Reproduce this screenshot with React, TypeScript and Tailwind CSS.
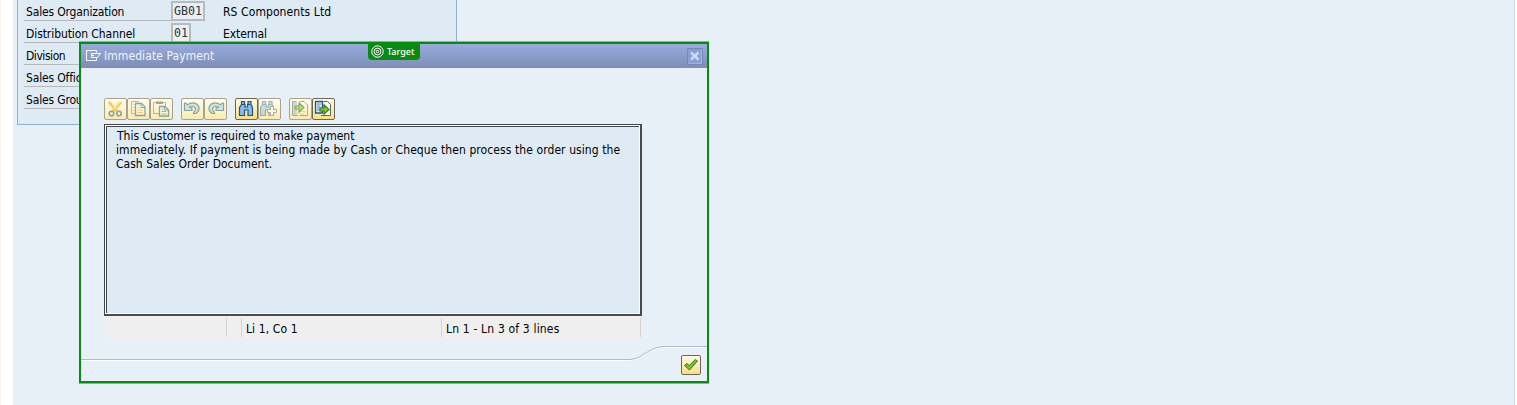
import type { ReactNode } from "react";

const rows = [
  { label: "Sales Organization", code: "GB01", text: "RS Components Ltd", labelClass: "tracking-[-0.16px]", textClass: "tracking-[0.09px]" },
  { label: "Distribution Channel", code: "01", text: "External", labelClass: "tracking-[-0.08px]", textClass: "tracking-[-0.1px]" },
  { label: "Division", labelClass: "tracking-[-0.45px]" },
  { label: "Sales Office", labelClass: "tracking-[-0.16px]" },
  { label: "Sales Group", labelClass: "tracking-[-0.16px]" },
];

function ToolButton({ children, disabled = false }: { children: ReactNode; disabled?: boolean }) {
  return (
    <button
      className={
        "h-[22px] w-[23px] rounded-[2px] border bg-gradient-to-b " +
        (disabled
          ? "border-[#aaa28d] from-[#fffdee] to-[#fbebb0]"
          : "border-[#6c6658] from-[#fffbe0] to-[#f9df83]")
      }
    >
      <svg width="21" height="20" viewBox="1 1 21 20" fill="none" className={disabled ? "opacity-60" : ""}>
        {children}
      </svg>
    </button>
  );
}

function Binoculars() {
  return (
    <g fill="#8db9e8" stroke="#1d5788" strokeWidth="1.2">
      <path d="M6.5 3.5H9.5V6.5H10V9H12.5V6.5H13V3.5H16V6.5L17.5 9.5V17.5H13V12H9.5V17.5H4.5V9.5L6.5 6.5Z" />
      <path d="M7 6.5H9.5M13 6.5H15.5" />
    </g>
  );
}

function Arrow() {
  return <path d="M9 10H13V6.8L18 11.5L13 16.2V13H9Z" fill="#8acb25" stroke="#35741e" strokeWidth="1.1" />;
}

function Undo() {
  return (
    <path
      d="M3.5 5V12.5H11V10.5L8.6 9.3C11.5 7.4 15 9 14.5 12L12.5 14.5V15.5H15C17.5 13.5 18.6 11 17.8 8.6C16.3 4.5 10.5 3.8 6.5 6.8L4.8 5Z"
      fill="#b4d8de"
      stroke="#396f86"
      strokeWidth="1.2"
    />
  );
}

export default function App() {
  return (
    <main className="relative h-[405px] w-[1517px] overflow-hidden border-l border-[#f5f5f5] bg-white pl-3 font-['DejaVu_Sans_Condensed','DejaVu_Sans',sans-serif] text-[12px] text-black">
      <div className="h-full w-[1502px] border-r border-[#d5e0eb] bg-[#e7eff7] pl-1">
        <section className="h-[125px] w-[440px] border-x border-b border-[#94b0cf] bg-[#deebf5] pl-[6px]">
          {rows.map((row, i) => (
            <div key={row.label} className={"flex " + (i === 0 ? "h-[21px]" : "h-[22px]")}>
              <div className="flex w-[147px] items-end border-b border-[#b8b8b8] pl-[2px]">
                <span className={"mb-[1px] h-[14px] whitespace-nowrap leading-[14px] " + row.labelClass}>{row.label}</span>
              </div>
              {row.code && (
                <>
                  <div className="flex w-[52px] items-end">
                    <span className={"h-[20px] border-2 border-[#b4bcc3] bg-[#e9eff4] pl-[1px] font-['DejaVu_Sans_Mono',monospace] text-[11.6px] leading-[17px] text-[#333] " + (i === 0 ? "w-[34px]" : "w-[20px]")}>
                      {row.code}
                    </span>
                  </div>
                  <span className={"mb-[2px] self-end whitespace-nowrap leading-[14px] " + row.textClass}>{row.text}</span>
                </>
              )}
            </div>
          ))}
        </section>
      </div>

      <section className="absolute left-[78px] top-[42px] flex h-[341px] w-[630px] flex-col border-2 border-[#078b11] bg-[#e7eff7] shadow-[0_1px_0_#8daab1,0_-1px_0_#8eaab4]">
        <header className="flex h-6 shrink-0 items-center bg-gradient-to-b from-[#99abdc] to-[#7c8eb5] pl-[5px] pr-1 text-white">
          <svg width="16" height="12" viewBox="0 0 16 12" fill="none" stroke="white">
            <path d="M10.5 2.5V.5H.5V10.5H10.5V8.5M5.5 3.5H14.5L11.5 7.5H5.5V3.5M5.5 5.5H8" />
          </svg>
          <h1 className="ml-[2px] flex-1 text-[12px] leading-[14px] tracking-[0.08px] text-[#f0f4ff]">Immediate Payment</h1>
          <button className="flex h-[17px] w-4 items-center justify-center rounded-[1px] border border-[#7187b4] bg-[#8b9fce] shadow-[inset_-1px_-1px_0_#a1b3df]">
            <svg width="10" height="10" viewBox="0 0 10 10" stroke="#cbdbff" strokeWidth="2.4">
              <path d="M1 1.5L8.5 8.5M8.5 1.5L1 8.5" />
            </svg>
          </button>
        </header>

        <div className="mt-[30px] flex h-[22px] shrink-0 gap-2 pl-[23px]">
          <div className="flex">
            <ToolButton disabled>
              <path d="M5 4L13 13M17 4L9 13" stroke="#f5a914" strokeWidth="3" />
              <path d="M7 4L12 11M16 4L10 11" stroke="#ffe788" strokeWidth="1" />
              <circle cx="7.5" cy="15.5" r="2.3" stroke="#456f86" strokeWidth="1.6" />
              <circle cx="15" cy="15.5" r="2.3" stroke="#456f86" strokeWidth="1.6" />
            </ToolButton>
            <ToolButton disabled>
              <path d="M4.5 3.5H11.5V15.5H4.5Z" fill="#fff9d5" stroke="#898c77" />
              <path d="M6 6.5H10M6 9.5H10M6 12.5H10" stroke="#eebc43" />
              <path d="M8.5 5.5H14.5L18 9V17.5H8.5Z" fill="#fffbe5" stroke="#35748f" strokeWidth="1.3" />
              <path d="M14 6V9.5H18" stroke="#35748f" />
              <path d="M10.5 9.5H13M10.5 12H16M10.5 14.5H16" stroke="#eeb034" strokeWidth="1.2" />
            </ToolButton>
            <ToolButton disabled>
              <path d="M9 15.5H3.5V4.5H15.5V8" stroke="#898c77" />
              <path d="M6 5.5V3.5H13V6H6Z" fill="#686b65" />
              <path d="M9.5 8.5H15L18.5 12V18H9.5Z" fill="#fffbe5" stroke="#35748f" strokeWidth="1.3" />
              <path d="M11.5 11H13.5M11.5 13.5H16.5M11.5 16H16.5" stroke="#5d8b9a" />
              <path d="M14.5 9V12H18" stroke="#35748f" />
            </ToolButton>
          </div>
          <div className="flex">
            <ToolButton disabled><Undo /></ToolButton>
            <ToolButton disabled>
              <g transform="translate(23 0) scale(-1 1)"><Undo /></g>
            </ToolButton>
          </div>
          <div className="flex">
            <ToolButton><Binoculars /></ToolButton>
            <ToolButton disabled>
              <g opacity=".7" transform="translate(-2 0)"><Binoculars /></g>
              <path d="M12.5 8.5H15.5V11.5H18.5V14.5H15.5V17.5H12.5V14.5H9.5V11.5H12.5Z" fill="white" stroke="#6e818b" />
            </ToolButton>
          </div>
          <div className="flex">
            <ToolButton disabled>
              <path d="M4 4H8V17H4Z" fill="#a8c5d3" />
              <path d="M7.5 3.5H3.5V17.5H9M10.5 3.5H15L18.5 7V17.5H10.5" stroke="#747d70" />
              <path d="M11 13.5H16M11 16H15" stroke="#d7c584" />
              <g transform="translate(-3 -2)"><Arrow /></g>
            </ToolButton>
            <ToolButton>
              <path d="M11.5 3.5H15.5L18.5 6.5V17.5H9" fill="#fffbe5" stroke="#56666b" />
              <path d="M3.5 3.5H10.5V15H3.5Z" fill="#d2e7fa" stroke="#22578e" strokeWidth="1.3" />
              <path d="M5 6H9M5 8H8M5 10H8M5 12H8" stroke="#6098c7" />
              <g transform="translate(-1 0)"><Arrow /></g>
            </ToolButton>
          </div>
        </div>

        <div className="ml-[23px] mt-1 h-[192px] w-[538px] shrink-0 border border-b-2 border-r-2 border-[#41464b] border-b-[#4c4c4c] border-r-[#4c4c4c] bg-white p-[1px]">
          <div className="h-full border-l border-t border-[#41464b] bg-[#deebf5] pl-[9px] pt-[2px] text-[12px] leading-[14px]">
            <p className="whitespace-nowrap pl-[1px] tracking-[0px]">This Customer is required to make payment</p>
            <p className="whitespace-nowrap tracking-[0.085px]">immediately. If payment is being made by Cash or Cheque then process the order using the</p>
            <p className="whitespace-nowrap tracking-[0.02px]">Cash Sales Order Document.</p>
          </div>
        </div>
        <div className="ml-[23px] flex h-[23px] w-[537px] shrink-0 bg-[#efefef] py-[2px] leading-[23px]">
          <div className="w-[123px] border-r border-[#d4d4d4]" />
          <div className="w-[15px] border-r border-[#d4d4d4]" />
          <div className="w-[200px] border-r border-[#d4d4d4] pl-1 tracking-[0.1px]">Li 1, Co 1</div>
          <div className="w-[199px] border-r border-[#d8d4cd] pl-1 tracking-[0.17px]">Ln 1 - Ln 3 of 3 lines</div>
        </div>
        <footer className="relative flex flex-1 justify-end pr-[6px] pt-4">
          <svg className="absolute left-0 top-0" width="626" height="30" fill="none">
            <path d="M0 21.5H548C562 21.5 567 8.5 584 8.5H626" stroke="white" />
            <path d="M0 20.5H548C562 20.5 567 7.5 584 7.5H626" stroke="#adb9ce" />
          </svg>
          <button className="flex h-5 w-5 items-center justify-center rounded-[2px] border border-[#6c6658] bg-gradient-to-b from-[#fffbe0] to-[#f9df83]">
            <svg width="16" height="16" viewBox="0 0 16 16">
              <path d="M1.5 8.5L4 6.5L6.3 8.5L12.3 2.5L14.5 4L6.5 13Z" fill="#76c522" stroke="#3d7330" />
            </svg>
          </button>
        </footer>
      </section>

      <div className="absolute left-[367px] top-[42px] flex h-[18px] w-[52px] items-center rounded-b-[4px] bg-[#078b11] pl-[3px] text-white">
        <svg width="13" height="13" viewBox="0 0 13 13" fill="none" stroke="white">
          <circle cx="6.5" cy="6.5" r="5.7" />
          <circle cx="6.5" cy="6.5" r="3.4" />
          <circle cx="6.5" cy="6.5" r="1.2" />
        </svg>
        <span className="ml-[3px] mt-[1px] font-['Noto_Sans','Open_Sans',sans-serif] text-[9px] font-medium">Target</span>
      </div>
    </main>
  );
}
